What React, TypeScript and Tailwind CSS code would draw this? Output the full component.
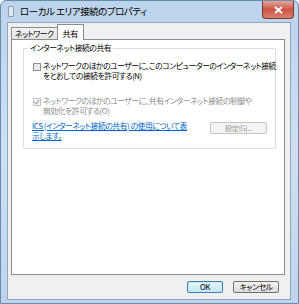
const jp = "font-['Meiryo_UI','Noto_Sans_CJK_JP',sans-serif] [font-feature-settings:'palt']";

function Checkbox({ checked, disabled }: { checked?: boolean; disabled?: boolean }) {
  return (
    <span
      className={`mt-[2px] flex h-[8px] w-[8px] flex-none items-center justify-center border ${
        disabled ? "border-[#c2c2c2] bg-[#f4f4f4]" : "border-[#8f8f8f] bg-[#e9e9e9]"
      }`}
    >
      {checked && (
        <svg width="6" height="6" viewBox="0 0 6 6">
          <path d="M0.8 3 L2.4 4.6 L5.2 1" fill="none" stroke="#a8a8a8" strokeWidth="1.2" />
        </svg>
      )}
    </span>
  );
}

export default function App() {
  return (
    <div
      className={`flex h-[304px] w-[299px] flex-col overflow-hidden rounded-t-[6px] border border-[#6a8bb0] bg-gradient-to-b from-[#bcd3ec] via-[#cfe0f3] to-[#bfd4ea] ${jp}`}
    >
      {/* title bar */}
      <div className="flex h-[21px] flex-none items-start">
        <div className="ml-[7px] mt-[5px] h-[11px] w-[6px] rounded-[1px] border border-[#8aa0b6] bg-[#dfe8f0]" />
        <span className="ml-[6px] mt-[3px] text-[9.5px] leading-[14px] tracking-[-0.5px] text-black">
          ローカル エリア接続のプロパティ
        </span>
        <div className="ml-auto mr-[4px] flex h-[18px] w-[32px] items-center justify-center rounded-b-[4px] border border-t-0 border-[#7a3a33] bg-gradient-to-b from-[#e4a49a] via-[#cc5446] to-[#d9806e]">
          <svg width="9" height="8" viewBox="0 0 9 8">
            <path d="M1 1 L8 7 M8 1 L1 7" stroke="#fff" strokeWidth="2" />
          </svg>
        </div>
      </div>

      {/* client */}
      <div className="mb-[3px] ml-[6px] mr-[7px] flex flex-1 flex-col border border-[#8fa6bf] bg-[#f0f0f0] text-[7.8px] tracking-[-0.45px] text-black">
        {/* tabs */}
        <div className="ml-[3px] mt-[1px] flex items-end">
          <div className="mb-[-1px] flex h-[13px] items-center border border-[#898c95] bg-gradient-to-b from-[#f3f3f3] to-[#e3e3e3] px-[3px]">
            ネットワーク
          </div>
          <div className="relative z-10 mb-[-1px] ml-[-1px] flex h-[16px] items-start border border-b-0 border-[#898c95] bg-white px-[5px] pt-[2px] text-[8.2px]">
            共有
          </div>
        </div>

        {/* panel */}
        <div className="ml-[3px] mr-[5px] h-[236px] border border-[#898c95] bg-white pl-[11px] pr-[8px] pt-[8px]">
          <div className="relative rounded-[2px] border border-[#dcdcdc] px-[9px] pb-[7px] pt-[12px]">
            <span className="absolute left-[4px] top-[-6px] bg-white px-[2px] leading-[10px]">
              インターネット接続の共有
            </span>

            <div className="flex gap-[2px]">
              <Checkbox />
              <div className="whitespace-nowrap leading-[10px]">
                <div>ネットワークのほかのユーザーに、このコンピューターのインターネット接続</div>
                <div>をとおしての接続を許可する(N)</div>
              </div>
            </div>

            <div className="mt-[15px] flex gap-[2px] text-[#8d8d8d]">
              <Checkbox checked disabled />
              <div className="whitespace-nowrap leading-[10px]">
                <div>ネットワークのほかのユーザーに、共有インターネット接続の制御や</div>
                <div>無効化を許可する(O)</div>
              </div>
            </div>

            <div className="mt-[5px] flex items-start">
              <div className="ml-[-1px] leading-[10px] text-[#0066cc] underline">
                <div className="whitespace-nowrap">ICS (インターネット接続の共有) の使用について表</div>
                <div>示します。</div>
              </div>
              <div className="ml-auto mr-[-1px] mt-[1px] flex h-[12px] w-[57px] items-center justify-center rounded-[2px] border border-[#c4c4c4] bg-[#f4f4f4] text-[7.4px] text-[#9a9a9a]">
                設定(G)...
              </div>
            </div>
          </div>
        </div>

        {/* buttons */}
        <div className="mr-[11px] mt-[6px] flex justify-end gap-[10px]">
          <div className="flex h-[12px] w-[36px] items-center justify-center rounded-[2px] border border-[#3c7fb1] bg-gradient-to-b from-[#eaf6fd] to-[#bee6fd] shadow-[inset_0_0_0_1px_#c8eafc]">
            OK
          </div>
          <div className="flex h-[12px] w-[46px] items-center justify-center rounded-[2px] border border-[#707070] bg-gradient-to-b from-[#f2f2f2] to-[#dcdcdc]">
            キャンセル
          </div>
        </div>
      </div>
    </div>
  );
}
